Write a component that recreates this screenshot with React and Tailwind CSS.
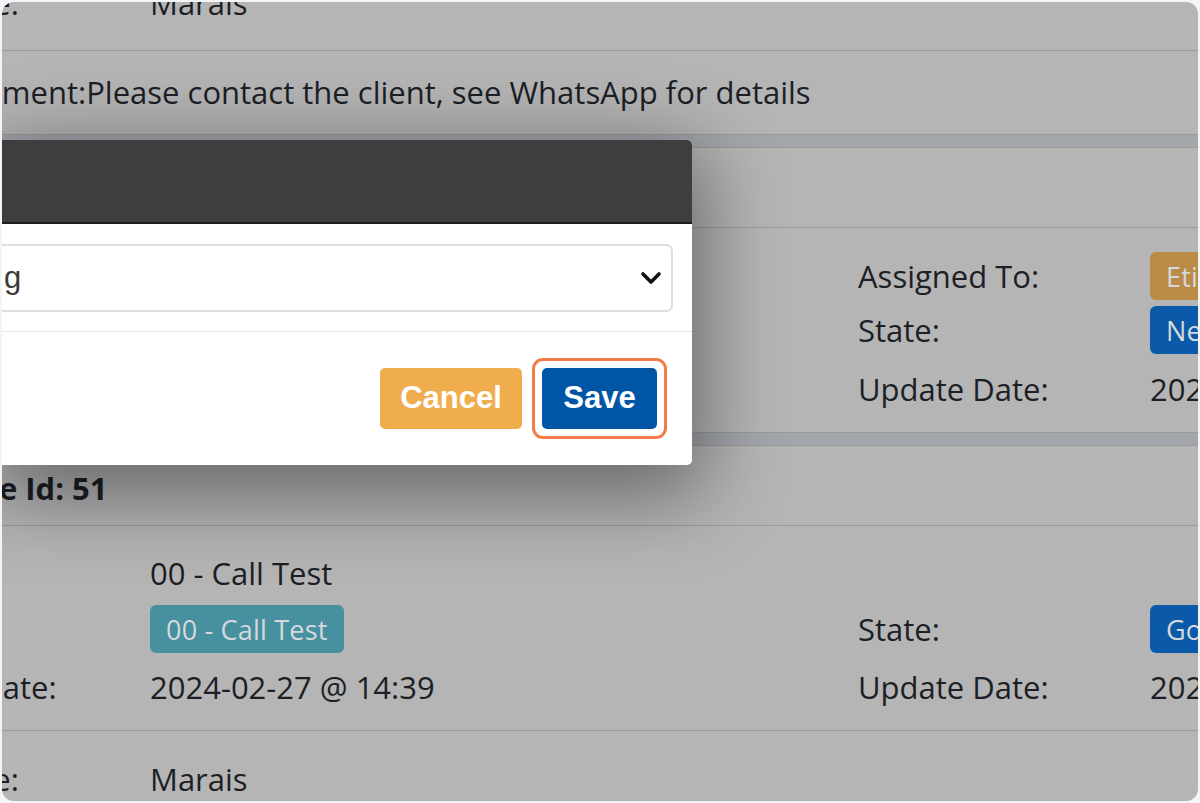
import React from "react";

const font = { fontFamily: '"Open Sans", "Noto Sans", sans-serif' };

const Badge = ({ color, children }) => (
    <span className={`inline-flex items-center h-[48px] px-[16px] rounded-[6px] text-[27px] leading-none text-[#d6d9db] ${color}`}>
        <span className="tracking-[0.2px]">{children}</span>
    </span>
);

// one data row: left label, left value, right label, right value
const Row = ({ h, label, labelShift = "", value, rlabel, rvalue }) => (
    <div className={`grid grid-cols-[203px_708px_292px_1fr] items-center ${h}`}>
        <div className="whitespace-nowrap">
            <span className={`inline-block ${labelShift}`}>{label}</span>
        </div>
        <div className="whitespace-nowrap flex items-center">{value}</div>
        <div className="whitespace-nowrap">{rlabel}</div>
        <div className="whitespace-nowrap flex items-center">{rvalue}</div>
    </div>
);

const Band = () => <div className="h-[13px] bg-[#a3a6ab] border-b border-[#9a9a9a]"></div>;

export default function App() {
    return (
        <div className="w-[1200px] h-[803px] bg-[#f4f4f4] p-[2px]">
            <div className="relative h-full rounded-[12px] overflow-hidden bg-[#b5b5b5] text-[31px] text-[#1c1f26]" style={font}>
                {/* page under the backdrop */}
                <div className="-mt-[45px] -ml-[55px]">
                    {/* card 1 (tail) */}
                    <div className="border-b border-[#9a9a9a]">
                        <Row h="h-[94px] border-b border-[#9a9a9a]" label="Name:" labelShift="-ml-[23px]" value="Marais" />
                        <div className="h-[83px] flex items-center whitespace-nowrap">
                            <span className="ml-[-12px]">Comment:Please contact the client, see WhatsApp for details</span>
                        </div>
                    </div>
                    <Band />

                    {/* card 2 */}
                    <div className="border-b border-[#9a9a9a]">
                        <div className="h-[80px] border-b border-[#9a9a9a]"></div>
                        <div className="pt-[20px] pb-[10px]">
                            <Row h="h-[56px]" label="" value="" rlabel="Assigned To:" rvalue={<Badge color="bg-[#b98b47]">Etienne</Badge>} />
                            <Row h="h-[52px]" label="" value="" rlabel="State:" rvalue={<Badge color="bg-[#0b5aa9]">New</Badge>} />
                            <Row h="h-[66px]" label="" value="" rlabel="Update Date:" rvalue="2024-02-27 @ 14:39" />
                        </div>
                    </div>
                    <Band />

                    {/* card 3 */}
                    <div className="border-b border-[#9a9a9a]">
                        <div className="h-[80px] pt-[5px] flex items-center border-b border-[#9a9a9a] whitespace-nowrap font-bold">
                            <span className="ml-[-2px]">Case Id: 51</span>
                        </div>
                        <div className="pt-[16px] pb-[10px]">
                            <Row h="h-[62px]" label="" value="00 - Call Test" />
                            <Row h="h-[50px]" label="" value={<Badge color="bg-[#4790a0]">00 - Call Test</Badge>} rlabel="State:" rvalue={<Badge color="bg-[#0b5aa9]">Going</Badge>} />
                            <Row h="h-[66px]" label="Create Date:" labelShift="-ml-[70px]" value="2024-02-27 @ 14:39" rlabel="Update Date:" rvalue="2024-02-27 @ 14:39" />
                        </div>
                    </div>
                    <Row h="h-[96px]" label="Name:" labelShift="-ml-[23px]" value="Marais" />
                </div>

                {/* modal */}
                <div className="absolute left-0 top-[138px] w-[690px] h-[325px] bg-white rounded-r-[5px] flex flex-col shadow-[0_20px_80px_12px_rgba(0,0,0,0.42)]">
                    <div className="h-[84px] bg-[#3e3e3e] border-b-2 border-[#1e1e1e] rounded-tr-[5px]"></div>
                    <div className="pt-[20px] pr-[19px] pb-[19px] border-b border-[#e6e8ea]">
                        <div className="h-[68px] -ml-[10px] border-2 border-[#dedede] rounded-[7px] flex items-center justify-between pr-[9px]">
                            <span className="ml-[10px] text-[31px] text-[#3a3a3a]" style={{ fontFamily: '"Liberation Sans", Arial, sans-serif' }}>g</span>
                            <svg width="22" height="14" viewBox="0 0 22 14" fill="none">
                                <path d="M3 3l8 8 8-8" stroke="#111" strokeWidth="3.6" strokeLinecap="round" strokeLinejoin="round" />
                            </svg>
                        </div>
                    </div>
                    <div className="flex-1 flex items-center justify-end pr-[25px] gap-[10px]" style={{ fontFamily: '"Liberation Sans", Arial, sans-serif' }}>
                        <button className="w-[142px] h-[61px] rounded-[5px] bg-[#f0ad4e] text-white text-[31px] font-bold">Cancel</button>
                        <div className="p-[7px] border-[3px] border-[#f47b45] rounded-[11px]">
                            <button className="w-[115px] h-[61px] rounded-[5px] bg-[#0155a5] text-white text-[31px] font-bold">Save</button>
                        </div>
                    </div>
                </div>
            </div>
        </div>
    );
}
